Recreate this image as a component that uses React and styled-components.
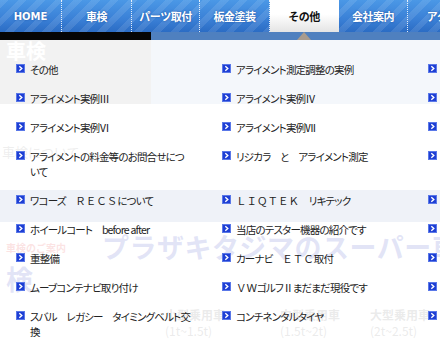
import React from "react";
import styled, { createGlobalStyle } from "styled-components";

const GlobalStyle = createGlobalStyle`
  html, body {
    margin: 0;
    padding: 0;
    overflow: hidden;
    background: #fff;
  }
  body {
    font-family: "Noto Sans CJK JP", "Noto Sans", sans-serif;
  }
`;

const navItems = ["HOME", "車検", "パーツ取付", "板金塗装", "その他", "会社案内", "アクセス"];
const navWidths = [62, 70, 68, 70, 69, 69, 80];

const menuItems = [
  ["その他", "アライメント測定調整の実例", "タイヤ交換"],
  ["アライメント実例Ⅲ", "アライメント実例Ⅳ", "アライメント実例Ⅴ"],
  ["アライメント実例Ⅵ", "アライメント実例Ⅶ", "アライメント実例Ⅷ"],
  ["アライメントの料金等のお問合せについて", "リジカラ　と　アライメント測定", "コーティング"],
  [["ワコーズ　", "ＲＥＣＳ", "について"], ["", "ＬＩＱＴＥＫ", "　リキテック"], "オイル交換"],
  ["ホイールコート　before after", "当店のテスター機器の紹介です", "エンジン洗浄"],
  ["重整備", ["カーナビ　", "ＥＴＣ", "取付"], "足回り"],
  ["ムーブコンテナビ取り付け", ["", "ＶＷ", "ゴルフⅡまだまだ現役です"], "ブレーキ"],
  ["スバル　レガシー　タイミングベルト交換", "コンチネンタルタイヤ", "バッテリー"],
];

export default function App() {
  return (
    <>
      <GlobalStyle />
      <Page>
        <NavBar>
          {navItems.map((label, i) => (
            <NavItem key={label} $active={label === "その他"} $w={navWidths[i]} $latin={label === "HOME"}>
              {label}
            </NavItem>
          ))}
        </NavBar>
        <SubStrip>
          <DarkBar />
        </SubStrip>
        <Main>
          <TopBlock>
            <SideHead>車検</SideHead>
            <HeadFill />
          </TopBlock>
          <Lead>車検について</Lead>
          <Band />
          <Title>
            <Tag>車検のご案内</Tag>
            プラザキタジマのスーパー車検
          </Title>
          <PriceTable>
            <span />
            <Th>小型乗用車</Th>
            <Th>中型乗用車</Th>
            <Th>大型乗用車</Th>
            <span />
            <Td>(1t~1.5t)</Td>
            <Td>(1.5t~2t)</Td>
            <Td>(2t~2.5t)</Td>
          </PriceTable>
          <Dropdown>
            <MenuGrid>
              {menuItems.flat().map((item, i) => (
                <MenuItem key={i}>
                  <Arrow width="9" height="9" viewBox="0 0 9 9">
                    <rect x="0" y="0" width="9" height="9" fill="#1e3fd4" />
                    <rect x="0.5" y="0.5" width="8" height="8" fill="none" stroke="#5a78e8" strokeWidth="1" />
                    <path d="M3.3 2.2 L5.8 4.5 L3.3 6.8" fill="none" stroke="#fff" strokeWidth="1.4" />
                  </Arrow>
                  <ItemText>
                    {Array.isArray(item) ? (
                      <>
                        {item[0]}
                        <Wide>{item[1]}</Wide>
                        {item[2]}
                      </>
                    ) : (
                      item
                    )}
                  </ItemText>
                </MenuItem>
              ))}
            </MenuGrid>
          </Dropdown>
        </Main>
      </Page>
    </>
  );
}

const Page = styled.div`
  width: 440px;
  height: 346px;
  overflow: hidden;
`;

const NavBar = styled.ul`
  display: flex;
  margin: 0;
  padding: 0;
  list-style: none;
  height: 32px;
  position: relative;
  z-index: 2;
  background:
    repeating-linear-gradient(135deg, rgba(255, 255, 255, 0.1) 0 6px, rgba(255, 255, 255, 0) 6px 13px),
    linear-gradient(#4b98e6, #3a80d6 60%, #2b6cc4);
`;

const NavItem = styled.li`
  position: relative;
  flex: 0 0 ${(p) => p.$w}px;
  display: flex;
  align-items: center;
  justify-content: center;
  box-sizing: border-box;
  border-right: 1px dotted rgba(255, 255, 255, 0.85);
  font-family: ${(p) => (p.$latin ? '"DejaVu Sans", sans-serif' : '"Noto Sans CJK JP", sans-serif')};
  font-size: ${(p) => (p.$latin ? "10px" : "11px")};
  font-weight: bold;
  letter-spacing: ${(p) => (p.$latin ? "0" : "-0.5px")};
  color: ${(p) => (p.$active ? "#111" : "#fff")};
  text-shadow: ${(p) => (p.$active ? "none" : "0 0 2px #1b4f9c")};
  background: ${(p) => (p.$active ? "linear-gradient(#ffffff 45%, #e4e4e4)" : "transparent")};
  border-right-color: ${(p) => (p.$active ? "transparent" : "rgba(255,255,255,0.85)")};
  &::after {
    content: "";
    display: ${(p) => (p.$active ? "block" : "none")};
    position: absolute;
    top: 100%;
    left: 50%;
    margin-left: -7px;
    border-left: 7px solid transparent;
    border-right: 7px solid transparent;
    border-bottom: 8px solid #a89b8e;
  }
`;

const SubStrip = styled.div`
  height: 8px;
  background: #4f80bf;
  display: flex;
`;

const DarkBar = styled.div`
  width: 151px;
  background: #050505;
`;

const Main = styled.div`
  position: relative;
  height: 306px;
`;

const TopBlock = styled.div`
  display: flex;
  height: 64px;
`;

const SideHead = styled.div`
  width: 151px;
  background: #a2a2a2;
  color: #fff;
  font-size: 20px;
  font-weight: bold;
  padding: 0 6px;
  box-sizing: border-box;
  line-height: 22px;
`;

const HeadFill = styled.div`
  flex: 1;
  background: #afc3e4;
`;

const Lead = styled.div`
  height: 86px;
  box-sizing: border-box;
  padding: 38px 2px 0;
  font-size: 13px;
  color: #8a8a8a;
`;

const Band = styled.div`
  height: 32px;
  background: #8ba5cc;
`;

const Title = styled.h2`
  width: 480px;
  margin: 9px 0 0;
  padding: 0 6px;
  font-size: 27px;
  line-height: 31px;
  font-weight: bold;
  color: #3442c0;
  letter-spacing: 0.5px;
`;

const Tag = styled.span`
  font-size: 10px;
  color: #e23a3a;
  margin-right: 36px;
  vertical-align: 6px;
  letter-spacing: 0;
`;

const PriceTable = styled.div`
  display: grid;
  grid-template-columns: 165px 115px 90px 80px;
  margin-top: 13px;
  font-size: 12px;
  color: #707070;
  line-height: 16px;
`;

const Th = styled.span`
  font-weight: bold;
`;

const Td = styled.span``;

const Dropdown = styled.div`
  position: absolute;
  top: 0;
  left: 0;
  right: 0;
  bottom: 0;
  background: rgba(255, 255, 255, 0.86);
  padding: 15px 0 0 16px;
`;

const MenuGrid = styled.ul`
  display: grid;
  grid-template-columns: repeat(3, 206px);
  margin: 0;
  padding: 0;
  list-style: none;
`;

const MenuItem = styled.li`
  display: flex;
  align-items: flex-start;
  padding: 7px 31px 7px 0;
  font-size: 10.5px;
  line-height: 15px;
  color: #222;
`;

const Arrow = styled.svg`
  flex: 0 0 9px;
  margin: 2px 5px 0 0;
`;

const ItemText = styled.span`
  font-feature-settings: "palt";
  letter-spacing: -0.8px;
  min-width: 0;
`;

const Wide = styled.span`
  font-feature-settings: normal;
  letter-spacing: 0;
`;
